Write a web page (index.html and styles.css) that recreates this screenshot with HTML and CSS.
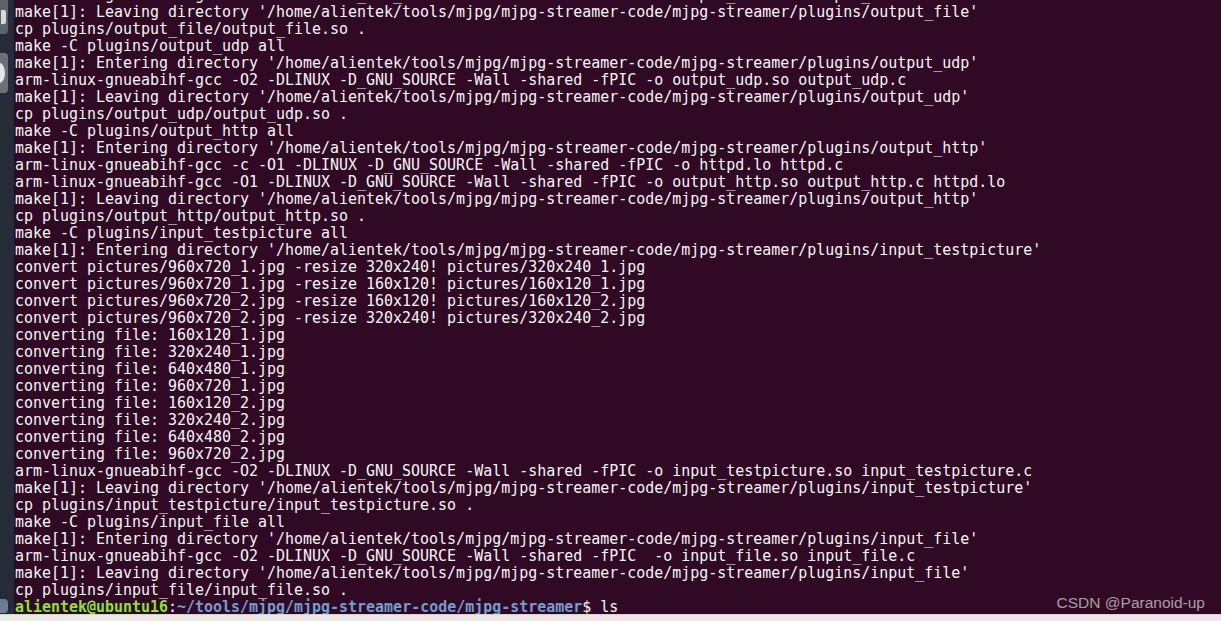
FILE: index.html
```html
<!DOCTYPE html>
<html>
<head>
<meta charset="utf-8">
<link rel="stylesheet" href="styles.css">
</head>
<body>
<div class="screen">
  <div class="main">
    <div class="launcher">
      <div class="tile tile-a"><span class="glyph-a"></span></div>
      <div class="tile tile-b"><span class="glyph-b"></span></div>
      <div class="launcher-fill"></div>
      <div class="tile tile-c"></div>
    </div>
    <div class="terminal">
<pre class="out">arm-linux-gnueabihf-gcc -O2 -DLINUX -D_GNU_SOURCE -Wall -shared -fPIC -o output_file.so output_file.c
make[1]: Leaving directory '/home/alientek/tools/mjpg/mjpg-streamer-code/mjpg-streamer/plugins/output_file'
cp plugins/output_file/output_file.so .
make -C plugins/output_udp all
make[1]: Entering directory '/home/alientek/tools/mjpg/mjpg-streamer-code/mjpg-streamer/plugins/output_udp'
arm-linux-gnueabihf-gcc -O2 -DLINUX -D_GNU_SOURCE -Wall -shared -fPIC -o output_udp.so output_udp.c
make[1]: Leaving directory '/home/alientek/tools/mjpg/mjpg-streamer-code/mjpg-streamer/plugins/output_udp'
cp plugins/output_udp/output_udp.so .
make -C plugins/output_http all
make[1]: Entering directory '/home/alientek/tools/mjpg/mjpg-streamer-code/mjpg-streamer/plugins/output_http'
arm-linux-gnueabihf-gcc -c -O1 -DLINUX -D_GNU_SOURCE -Wall -shared -fPIC -o httpd.lo httpd.c
arm-linux-gnueabihf-gcc -O1 -DLINUX -D_GNU_SOURCE -Wall -shared -fPIC -o output_http.so output_http.c httpd.lo
make[1]: Leaving directory '/home/alientek/tools/mjpg/mjpg-streamer-code/mjpg-streamer/plugins/output_http'
cp plugins/output_http/output_http.so .
make -C plugins/input_testpicture all
make[1]: Entering directory '/home/alientek/tools/mjpg/mjpg-streamer-code/mjpg-streamer/plugins/input_testpicture'
convert pictures/960x720_1.jpg -resize 320x240! pictures/320x240_1.jpg
convert pictures/960x720_1.jpg -resize 160x120! pictures/160x120_1.jpg
convert pictures/960x720_2.jpg -resize 160x120! pictures/160x120_2.jpg
convert pictures/960x720_2.jpg -resize 320x240! pictures/320x240_2.jpg
converting file: 160x120_1.jpg
converting file: 320x240_1.jpg
converting file: 640x480_1.jpg
converting file: 960x720_1.jpg
converting file: 160x120_2.jpg
converting file: 320x240_2.jpg
converting file: 640x480_2.jpg
converting file: 960x720_2.jpg
arm-linux-gnueabihf-gcc -O2 -DLINUX -D_GNU_SOURCE -Wall -shared -fPIC -o input_testpicture.so input_testpicture.c
make[1]: Leaving directory '/home/alientek/tools/mjpg/mjpg-streamer-code/mjpg-streamer/plugins/input_testpicture'
cp plugins/input_testpicture/input_testpicture.so .
make -C plugins/input_file all
make[1]: Entering directory '/home/alientek/tools/mjpg/mjpg-streamer-code/mjpg-streamer/plugins/input_file'
arm-linux-gnueabihf-gcc -O2 -DLINUX -D_GNU_SOURCE -Wall -shared -fPIC  -o input_file.so input_file.c
make[1]: Leaving directory '/home/alientek/tools/mjpg/mjpg-streamer-code/mjpg-streamer/plugins/input_file'
cp plugins/input_file/input_file.so .
<span class="user">alientek@ubuntu16</span>:<span class="path">~/tools/mjpg/mjpg-streamer-code/mjpg-streamer</span>$ ls</pre>
    </div>
  </div>
  <div class="strip"></div>
  <div class="watermark">CSDN @Paranoid-up</div>
</div>
</body>
</html>
```

FILE: styles.css
```css
html, body {
  margin: 0;
  padding: 0;
  width: 1221px;
  height: 621px;
  overflow: hidden;
  background: #300a24;
}

.screen {
  position: relative;
  width: 1221px;
  height: 621px;
  display: flex;
  flex-direction: column;
}

.main {
  flex: 1;
  display: flex;
  min-height: 0;
}

.launcher {
  width: 14px;
  flex: none;
  background: #252c37;
  display: flex;
  flex-direction: column;
  overflow: hidden;
}

.tile {
  width: 8px;
  flex: none;
  position: relative;
  overflow: hidden;
  border-radius: 0 4px 4px 0;
}

.tile-a {
  height: 36px;
  margin-top: -2px;
  background: #5c636e;
}

.glyph-a {
  position: absolute;
  left: 1px;
  top: 12px;
  width: 5px;
  height: 14px;
  background: #d8d8d8;
  border-radius: 0 2px 2px 0;
}

.tile-b {
  height: 40px;
  margin-top: 19px;
  background: #6b7079;
}

.glyph-b {
  position: absolute;
  left: -6px;
  top: 10px;
  width: 11px;
  height: 20px;
  background: #e6e6e6;
  border-radius: 50%;
}

.launcher-fill {
  flex: 1;
}

.tile-c {
  height: 14px;
  margin-bottom: 1px;
  background: #6e7b92;
}

.terminal {
  flex: 1;
  min-width: 0;
  padding-left: 1px;
  display: flex;
  flex-direction: column;
  justify-content: flex-end;
  overflow: hidden;
  background: #300a24;
}

.out {
  margin: 0 0 -2px 0;
  font-family: "DejaVu Sans Mono", "Liberation Mono", monospace;
  font-size: 14.96px;
  line-height: 17px;
  color: #f6f6f4;
  white-space: pre;
}

.user {
  color: #8ae234;
  font-weight: bold;
}

.path {
  color: #729fcf;
  font-weight: bold;
}

.strip {
  height: 7px;
  flex: none;
  background: linear-gradient(to right, #e9ece2, #ece6e4 40%, #efe6e8);
  border-top: 1px solid #d9d2d4;
  box-sizing: border-box;
}

.watermark {
  position: absolute;
  right: 16px;
  top: 594px;
  font-family: "Liberation Sans", Arial, sans-serif;
  font-size: 15.5px;
  line-height: 18px;
  color: rgba(255, 255, 255, 0.6);
}
```
